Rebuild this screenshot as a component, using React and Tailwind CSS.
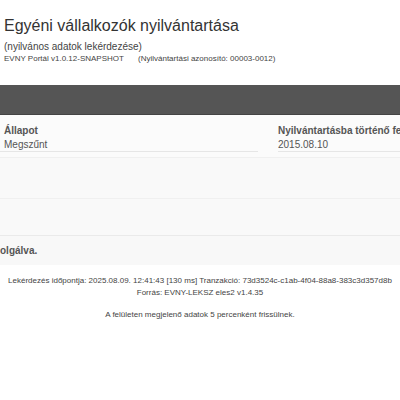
export default function App() {
  return (
    <div className="w-[400px] h-[400px] overflow-hidden bg-white text-[#333]" style={{ fontFamily: '"Liberation Sans", Arial, sans-serif' }}>
      {/* Header */}
      <div className="pl-[4px] pt-[16px] h-[85px]">
        <h1 className="text-[16px] leading-[20px] text-[#333]">Egyéni vállalkozók nyilvántartása</h1>
        <p className="mt-[4px] text-[10px] leading-[13px] text-[#444]">(nyilvános adatok lekérdezése)</p>
        <div className="mt-[1px] flex text-[8px] leading-[10px] text-[#444]">
          <span className="w-[134px]">EVNY Portál v1.0.12-SNAPSHOT</span>
          <span>(Nyilvántartási azonosító: 00003-0012)</span>
        </div>
      </div>

      {/* Dark bar */}
      <div className="h-[30px] bg-[#555555] border-b border-[#444]" />

      {/* Content */}
      <div className="bg-[#f9f9f9]">
        <div className="h-[42px] bg-[#fbfbfb] flex pt-[9px]">
          <div className="w-[258px] pl-[4px] border-b border-[#e6e6e6] h-[28px]">
            <div className="text-[10px] leading-[14px] font-bold text-[#555]">Állapot</div>
            <div className="text-[10px] leading-[14px] text-[#555]">Megszűnt</div>
          </div>
          <div className="ml-[20px] flex-1 border-b border-[#e6e6e6] h-[28px] whitespace-nowrap overflow-hidden">
            <div className="text-[10px] leading-[14px] font-bold text-[#555]">Nyilvántartásba történő fe</div>
            <div className="text-[10px] leading-[14px] text-[#555]">2015.08.10</div>
          </div>
        </div>
        <div className="h-[41px] border-t border-[#f0f0f0]" />
        <div className="h-[37px] border-t border-[#f0f0f0]" />
        <div className="h-[30px] border-t border-[#eaeaea] bg-[#f8f8f8] pt-[9px]">
          <div className="text-[10px] leading-[12px] font-bold text-[#555]">olgálva.</div>
        </div>
      </div>

      {/* Footer */}
      <div className="pt-[10px] text-center text-[8px] leading-[12px] text-[#444]">
        <p>Lekérdezés időpontja: 2025.08.09. 12:41:43 [130 ms] Tranzakció: 73d3524c-c1ab-4f04-88a8-383c3d357d8b</p>
        <p>Forrás: EVNY-LEKSZ eles2 v1.4.35</p>
        <p className="mt-[10px]">A felületen megjelenő adatok 5 percenként frissülnek.</p>
      </div>
    </div>
  );
}
